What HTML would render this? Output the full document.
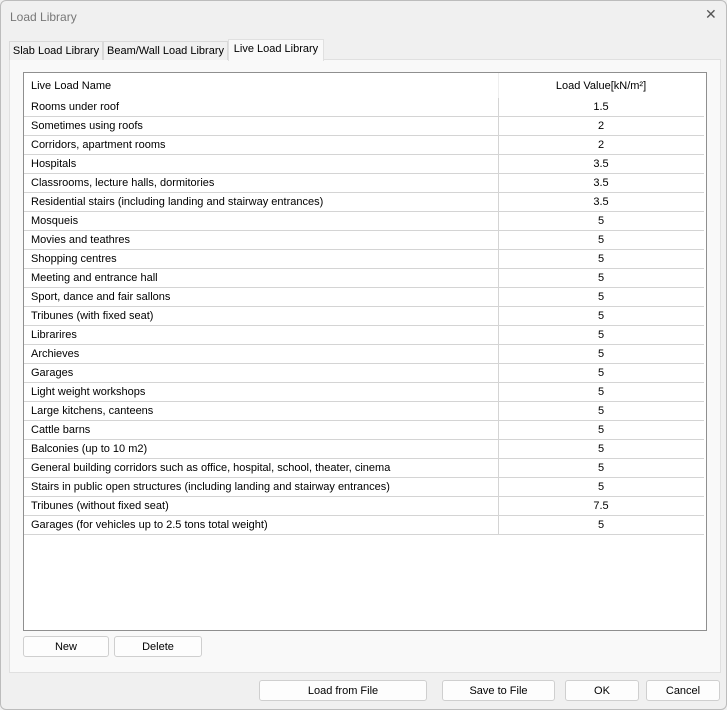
<!DOCTYPE html><html><head><style>
body{margin:0;width:727px;height:710px;background:#f0f0f0;font-family:"Liberation Sans",sans-serif;font-size:11px;color:#000;position:relative;overflow:hidden}
.win{position:absolute;left:0;top:0;width:725px;height:708px;border:1px solid #bcbcbc;border-radius:6px;background:#f0f0f0}
.title{position:absolute;left:9px;top:9px;font-size:12px;color:#777}
.x{position:absolute;left:704px;top:5px;font-size:14px;color:#555;font-weight:300}
.tab{position:absolute;top:40px;height:18px;border:1px solid #d9d9d9;border-bottom:none;background:#f0f0f0;line-height:18px;text-align:center;font-size:11px}
.panel{position:absolute;left:8px;top:58px;width:710px;height:612px;border:1px solid #e0e0e0;background:#f9f9f9}
.tbl{position:absolute;left:22px;top:71px;width:682px;height:557px;border:1px solid #8f8f8f;background:#fff}
.row{position:absolute;left:0;width:680px;height:18px;border-bottom:1px solid #d4d4d4;line-height:19px}
.n{position:absolute;left:7px}
.v{position:absolute;left:474px;width:204px;text-align:center;height:19px;border-left:1px solid #d4d4d4}
.btn{position:absolute;height:19px;border:1px solid #cfcfcf;border-radius:3px;background:#fdfdfd;text-align:center;line-height:20px;font-size:11px}
</style></head><body><div class="win">
<div class="title">Load Library</div><div class="x">✕</div>
<div class="panel"></div>
<div class="tab" style="left:8px;width:92px">Slab Load Library</div>
<div class="tab" style="left:102px;width:123px">Beam/Wall Load Library</div>
<div class="tab" style="left:227px;top:38px;height:21px;width:94px;background:#f9f9f9;border-color:#e0e0e0;line-height:19px">Live Load Library</div>
<div class="tbl">
<div class="row" style="top:0;height:25px;border:none;line-height:26px"><span class="n">Live Load Name</span><span class="v" style="height:25px;border-color:#eee">Load Value[kN/m²]</span></div>
<div id="rows"></div>
</div>
<div class="btn" style="left:22px;top:635px;width:84px">New</div>
<div class="btn" style="left:113px;top:635px;width:86px">Delete</div>
<div class="btn" style="left:258px;top:679px;width:166px">Load from File</div>
<div class="btn" style="left:441px;top:679px;width:111px">Save to File</div>
<div class="btn" style="left:564px;top:679px;width:72px">OK</div>
<div class="btn" style="left:645px;top:679px;width:72px">Cancel</div>
</div>
<script>
var d=[["Rooms under roof","1.5"],["Sometimes using roofs","2"],["Corridors, apartment rooms","2"],["Hospitals","3.5"],["Classrooms, lecture halls, dormitories","3.5"],["Residential stairs (including landing and stairway entrances)","3.5"],["Mosqueis","5"],["Movies and teathres","5"],["Shopping centres","5"],["Meeting and entrance hall","5"],["Sport, dance and fair sallons","5"],["Tribunes (with fixed seat)","5"],["Librarires","5"],["Archieves","5"],["Garages","5"],["Light weight workshops","5"],["Large kitchens, canteens","5"],["Cattle barns","5"],["Balconies (up to 10 m2)","5"],["General building corridors such as office, hospital, school, theater, cinema","5"],["Stairs in public open structures (including landing and stairway entrances)","5"],["Tribunes (without fixed seat)","7.5"],["Garages (for vehicles up to 2.5 tons total weight)","5"]];
var h="";d.forEach(function(r,i){h+='<div class="row" style="top:'+(25+i*19)+'px"><span class="n">'+r[0]+'</span><span class="v">'+r[1]+'</span></div>'});
document.getElementById("rows").outerHTML=h;
</script>
</body></html>
